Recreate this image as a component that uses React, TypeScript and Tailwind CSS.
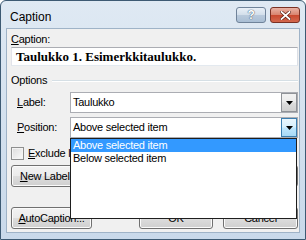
import React from "react";

const btn =
  "h-[22px] rounded-[3px] border border-[#707070] bg-[linear-gradient(to_bottom,#f2f2f2_0%,#ebebeb_48%,#dddddd_52%,#cfcfcf_100%)] shadow-[inset_0_0_0_1px_#fbfbfb] flex items-center justify-center shrink-0";

function Arrow() {
  return (
    <svg width="7" height="4" viewBox="0 0 7 4">
      <path d="M0 0H7L3.5 4Z" fill="#000" />
    </svg>
  );
}

function Combo({ text, active }: { text: string; active?: boolean }) {
  return (
    <div className="flex-1 h-[21px] border border-[#abadb3] bg-white flex items-stretch">
      <div className="flex-1 pl-[2px] flex items-center">{text}</div>
      <div
        className={
          active
            ? "w-[16px] my-[0px] border border-[#3c7fb1] bg-[linear-gradient(to_bottom,#eaf6fd_0%,#d9f0fc_45%,#bee6fd_55%,#a7d9f5_100%)] flex items-center justify-center"
            : "w-[16px] my-[0px] border border-[#8f9297] bg-[linear-gradient(to_bottom,#f2f2f2_0%,#ebebeb_48%,#dddddd_52%,#cfcfcf_100%)] flex items-center justify-center"
        }
      >
        <Arrow />
      </div>
    </div>
  );
}

export default function App() {
  return (
    <div className="w-[306px] h-[240px] bg-white">
      <div className="relative w-[306px] h-[240px] flex flex-col rounded-t-[6px] border border-[#3d5a73] bg-[linear-gradient(to_bottom,#dfe9f3,#c9d9ea)] font-['Liberation_Sans',Arial,sans-serif] text-[11px] tracking-[-0.25px] text-black overflow-hidden">
        {/* title bar */}
        <div className="h-[27px] flex items-start pl-[9px] pr-[5px]">
          <span className="mt-[7px] text-[12px] tracking-normal text-black">Caption</span>
          <div className="ml-auto mt-[6px] flex gap-[4px]">
            <div className="w-[30px] h-[16px] rounded-[3px] border border-[#6f839a] bg-[linear-gradient(to_bottom,#e9f0f7_0%,#d3dfeb_48%,#b9cadc_52%,#a9bed4_100%)] flex items-center justify-center">
              <span className="text-[12px] font-bold leading-none text-white [text-shadow:0_0_1px_#3a4e66,0_0_1px_#3a4e66]">?</span>
            </div>
            <div className="w-[30px] h-[16px] rounded-[3px] border border-[#7a3124] bg-[linear-gradient(to_bottom,#eab3a5_0%,#d98570_48%,#c9492f_52%,#d3684e_100%)] flex items-center justify-center">
              <svg width="11" height="9" viewBox="0 0 11 9">
                <path d="M1.5 1L9.5 8M9.5 1L1.5 8" stroke="#5a1e12" strokeWidth="3.2" strokeLinecap="square" />
                <path d="M1.5 1L9.5 8M9.5 1L1.5 8" stroke="#fff" strokeWidth="1.8" strokeLinecap="square" />
              </svg>
            </div>
          </div>
        </div>

        {/* client area */}
        <div className="mx-[5px] mb-[6px] flex-1 border border-[#9fb3c7] bg-[#f0f0f0] flex flex-col pl-[4px] pr-[1px] pb-[3px]">
          <div className="mt-[4px] h-[13px] flex items-center">
            <span>
              <u>C</u>aption:
            </span>
          </div>
          <div className="mt-[1px] h-[19px] border border-[#abadb3] border-t-[#abadb3] border-l-[#e2e3ea] border-r-[#dbdfe6] border-b-[#e3e9ef] bg-white flex items-center pl-[4px]">
            <span className="font-['Liberation_Serif','Times_New_Roman',serif] font-bold text-[13px] tracking-normal">
              Taulukko 1. Esimerkkitaulukko.
            </span>
          </div>
          <div className="mt-[8px] h-[13px] flex items-center">
            <span>Options</span>
            <div className="flex-1 ml-[5px] h-[2px] border-t border-[#d5dfe5] border-b border-b-white" />
          </div>
          <div className="mt-[5px] h-[21px] flex items-center">
            <div className="w-[59px] pl-[6px]">
              <u>L</u>abel:
            </div>
            <Combo text="Taulukko" />
          </div>
          <div className="mt-[4px] h-[21px] flex items-center">
            <div className="w-[59px] pl-[6px]">
              <u>P</u>osition:
            </div>
            <Combo text="Above selected item" active />
          </div>
          <div className="mt-[9px] h-[13px] flex items-center">
            <div className="w-[13px] h-[13px] border border-[#8e8f8f] bg-[linear-gradient(135deg,#dcdcdc,#fbfbfb)] shadow-[inset_0_0_0_1px_#f4f4f4]" />
            <span className="ml-[4px]">
              <u>E</u>xclude label from caption
            </span>
          </div>
          <div className="mt-[5px] flex justify-between">
            <div className={`${btn} w-[76px]`}>
              <span>
                <u>N</u>ew Label...
              </span>
            </div>
            <div className={`${btn} w-[76px]`}>
              <span>
                <u>D</u>elete Label
              </span>
            </div>
            <div className={`${btn} w-[75px]`}>
              <span>
                N<u>u</u>mbering...
              </span>
            </div>
          </div>
          <div className="flex-1" />
          <div className="flex items-center">
            <div className={`${btn} w-[81px]`}>
              <span>
                <u>A</u>utoCaption...
              </span>
            </div>
            <div className={`${btn} w-[74px] ml-auto`}>OK</div>
            <div className={`${btn} w-[75px] ml-[10px]`}>Cancel</div>
          </div>
        </div>

        {/* open dropdown list */}
        <div className="absolute left-[69px] top-[137px] w-[227px] h-[81px] border border-[#1e1e1e] bg-white flex flex-col">
          <div className="h-[13px] bg-[#3399ff] text-white pl-[2px] flex items-center">Above selected item</div>
          <div className="h-[13px] pl-[2px] flex items-center">Below selected item</div>
        </div>
      </div>
    </div>
  );
}
